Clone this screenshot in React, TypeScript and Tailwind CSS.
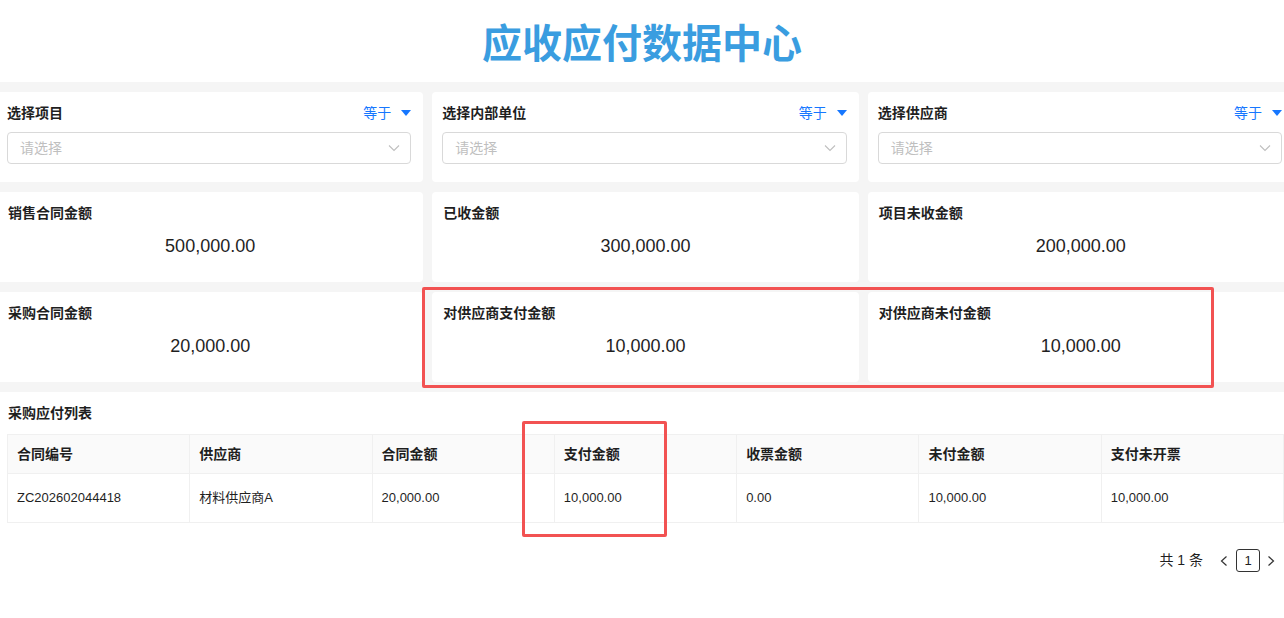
import React from 'react';

const FONT = { fontFamily: '"Liberation Sans", "Noto Sans CJK SC", sans-serif' };

const filters = ['选择项目', '选择内部单位', '选择供应商'];

const stats = [
  { label: '销售合同金额', value: '500,000.00' },
  { label: '已收金额', value: '300,000.00' },
  { label: '项目未收金额', value: '200,000.00' },
  { label: '采购合同金额', value: '20,000.00' },
  { label: '对供应商支付金额', value: '10,000.00' },
  { label: '对供应商未付金额', value: '10,000.00' },
];

const columns = ['合同编号', '供应商', '合同金额', '支付金额', '收票金额', '未付金额', '支付未开票'];
const rows = [['ZC202602044418', '材料供应商A', '20,000.00', '10,000.00', '0.00', '10,000.00', '10,000.00']];

function FilterCard({ label }: { label: string }) {
  return (
    <div className="bg-white rounded-[4px] h-[90px] pt-[11px] pl-[10px] pr-[12px]">
      <div className="flex items-center justify-between h-5">
        <span className="text-[14px] font-bold text-[#1f1f1f]">{label}</span>
        <span className="flex items-center text-[14px] text-[#1677ff]">
          等于
          <svg width="10" height="6" viewBox="0 0 10 6" className="ml-[10px]">
            <path d="M0 0h10L5 6z" fill="#1677ff" />
          </svg>
        </span>
      </div>
      <div className="mt-[9px] h-[32px] border border-[#d9d9d9] rounded-[4px] flex items-center justify-between pl-[12px] pr-[10px]">
        <span className="text-[14px] text-[#bfbfbf]">请选择</span>
        <svg width="12" height="8" viewBox="0 0 12 8">
          <path d="M1 1.5l5 5 5-5" fill="none" stroke="#bfbfbf" strokeWidth="1.1" />
        </svg>
      </div>
    </div>
  );
}

function StatCard({ label, value }: { label: string; value: string }) {
  return (
    <div className="bg-white rounded-[4px] h-[90px] pt-[11px] pl-[11px]">
      <div className="h-5 flex items-center text-[14px] font-bold text-[#1f1f1f]">{label}</div>
      <div className="mt-[10px] h-[26px] flex items-center justify-center text-[18px] text-[#1f1f1f] pr-[11px]">
        {value}
      </div>
    </div>
  );
}

export default function App() {
  return (
    <div className="w-full min-h-[618px] overflow-hidden bg-white relative" style={FONT}>
      <div className="h-[82px] flex items-center justify-center">
        <h1
          className="text-[40px] font-bold text-[#3a9de0]"
          style={{ fontFamily: '"Noto Sans CJK SC", sans-serif' }}
        >
          应收应付数据中心
        </h1>
      </div>

      <div className="bg-[#f5f5f5] pt-[10px]">
        <div className="w-[1297px] -ml-[3px] grid grid-cols-3 gap-x-[9px] gap-y-[10px]">
          {filters.map((f) => (
            <FilterCard key={f} label={f} />
          ))}
          {stats.map((s) => (
            <StatCard key={s.label} label={s.label} value={s.value} />
          ))}
        </div>
        <div className="h-[10px]" />
      </div>

      <div className="bg-white pt-[11px] pb-[40px]">
        <div className="h-5 flex items-center pl-[8px] text-[14px] font-bold text-[#1f1f1f]">采购应付列表</div>
        <div className="mt-[11px] pl-[7px]">
          <table className="w-[1277px] table-fixed border-collapse text-[13px] text-[#1f1f1f]">
            <thead>
              <tr className="bg-[#fafafa] h-[39px]">
                {columns.map((c) => (
                  <th key={c} className="border border-[#f0f0f0] text-left font-bold text-[14px] pl-[9px]">
                    {c}
                  </th>
                ))}
              </tr>
            </thead>
            <tbody>
              {rows.map((r, i) => (
                <tr key={i} className="h-[49px]">
                  {r.map((v, j) => (
                    <td key={j} className="border border-[#f0f0f0] pl-[9px]">
                      {v}
                    </td>
                  ))}
                </tr>
              ))}
            </tbody>
          </table>
        </div>

        <div className="mt-[26px] flex items-center justify-end pr-[8px] text-[14px] text-[#1f1f1f]">
          <span className="mr-[16px] whitespace-pre">共 1 条</span>
          <svg width="10" height="12" viewBox="0 0 10 12">
            <path d="M7.5 1.5L2.5 6 7.5 10.5" fill="none" stroke="#333" strokeWidth="1.2" />
          </svg>
          <span className="ml-[7px] mr-[6px] w-[24px] h-[23px] border border-[#333] rounded-[3px] flex items-center justify-center text-[13px]">
            1
          </span>
          <svg width="10" height="12" viewBox="0 0 10 12">
            <path d="M2.5 1.5L7.5 6 2.5 10.5" fill="none" stroke="#333" strokeWidth="1.2" />
          </svg>
        </div>
      </div>

      {/* annotation frames */}
      <div className="absolute left-[422px] top-[287px] w-[792px] h-[101px] border-[3px] border-[#f25252] rounded-[2px] pointer-events-none" />
      <div className="absolute left-[522px] top-[421px] w-[145px] h-[116px] border-[3px] border-[#f25252] rounded-[2px] pointer-events-none" />
    </div>
  );
}
